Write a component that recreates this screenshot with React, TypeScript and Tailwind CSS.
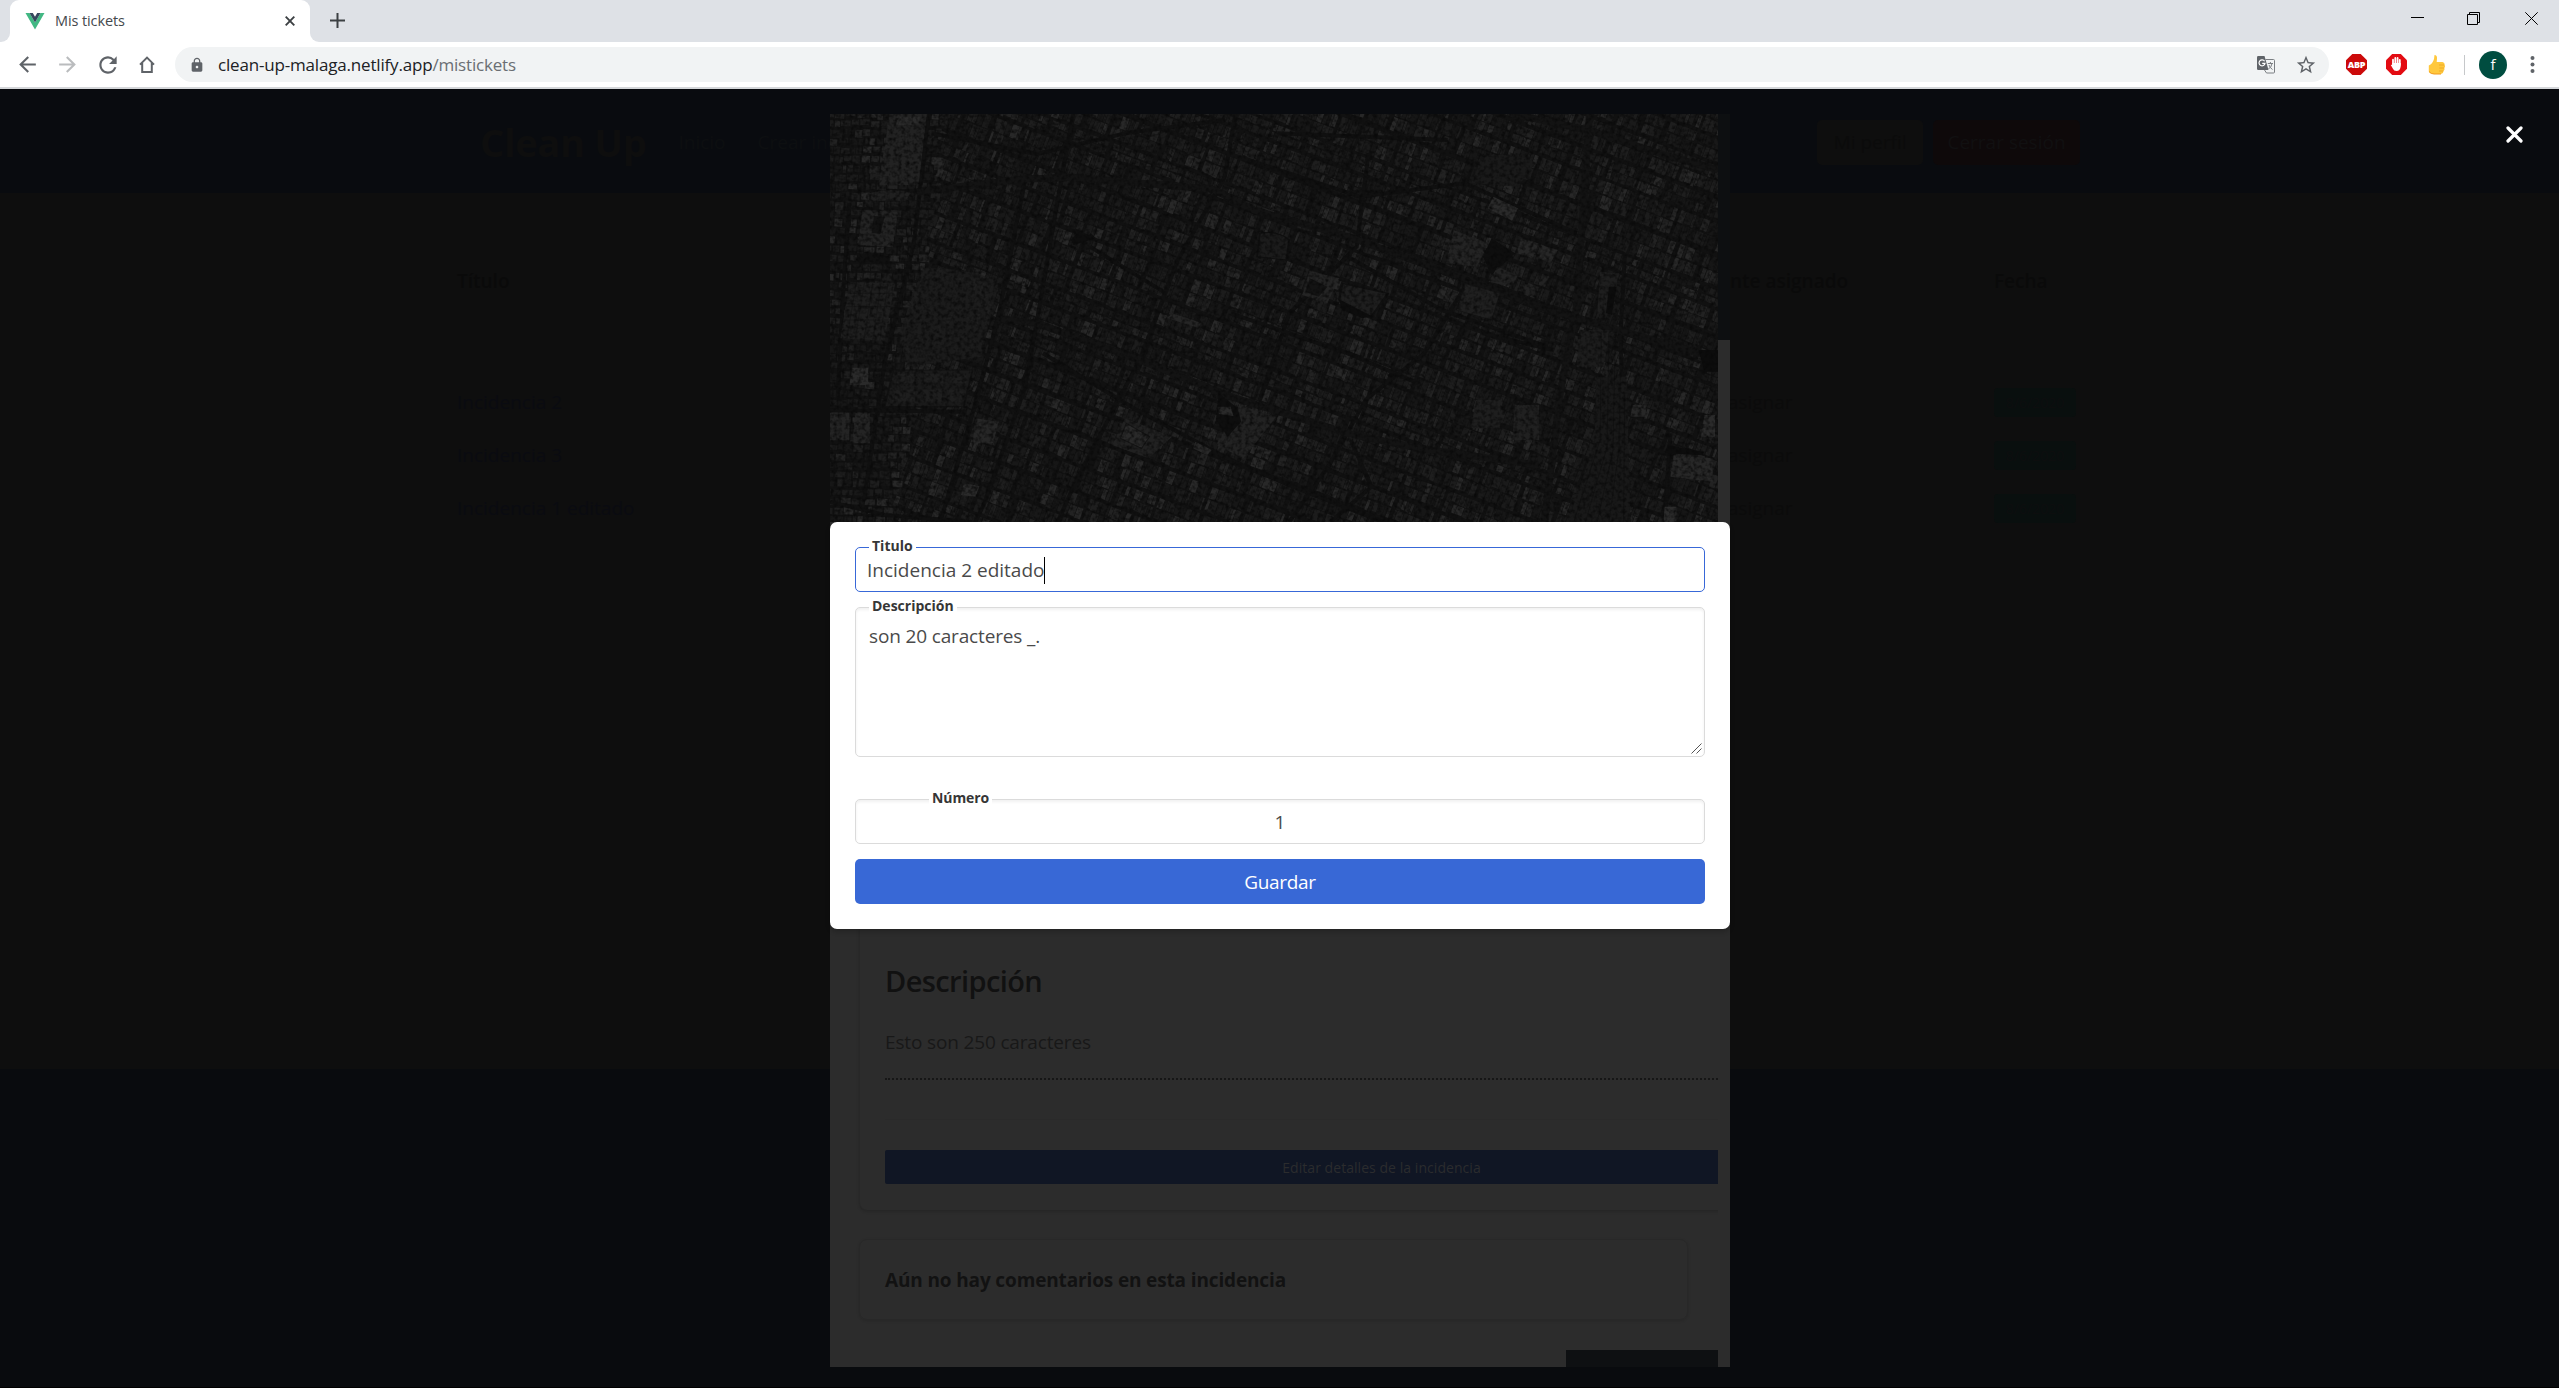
import React from "react";
import { MdArrowBack, MdArrowForward, MdLock, MdRefresh, MdStarBorder } from "react-icons/md";

const SHADES = ["#161616", "#181818", "#1a1a1a", "#1c1c1c", "#1e1e1e", "#222222", "#282828"];

function randomSource(seed: number) {
  let s = seed;
  return () => {
    s = (s * 1664525 + 1013904223) % 4294967296;
    return s / 4294967296;
  };
}

/* City blocks on a rotated street grid, each split into roofs grouped by shade. */
function buildRoofs() {
  const rnd = randomSource(41);
  const paths = SHADES.map(() => "");
  const roof = (x: number, y: number, w: number, h: number, a: number) => {
    const c = Math.cos(a);
    const s = Math.sin(a);
    const shade = Math.min(SHADES.length - 1, Math.floor(Math.pow(rnd(), 1.4) * SHADES.length));
    paths[shade] += `M${x.toFixed(1)} ${y.toFixed(1)}l${(w * c).toFixed(1)} ${(w * s).toFixed(1)}l${(-h * s).toFixed(1)} ${(h * c).toFixed(1)}l${(-w * c).toFixed(1)} ${(-w * s).toFixed(1)}z`;
  };
  const a = 0.36;
  const c = Math.cos(a);
  const s = Math.sin(a);
  let v = -340;
  while (v < 560) {
    const blockH = 15 + rnd() * 14;
    let u = -40 + rnd() * 20;
    while (u < 1080) {
      const blockW = 20 + rnd() * 26;
      const rows = 2;
      for (let r = 0; r < rows; r++) {
        const rowH = blockH / rows;
        let du = 0;
        while (du < blockW - 2) {
          const w = Math.min(2.5 + rnd() * 5.5, blockW - du);
          const x = (u + du) * c - (v + r * rowH) * s;
          const y = (u + du) * s + (v + r * rowH) * c;
          if (x > 112 - y * 0.12 && x < 900 && y > -30 && y < 415) {
            roof(x, y, w - 0.5, rowH - 0.4 - rnd() * 2, a + (rnd() - 0.5) * 0.04);
          }
          du += w;
        }
      }
      u += blockW + 2 + rnd() * 2;
    }
    v += blockH + 2 + rnd() * 2;
  }
  for (let y = -4; y < 410; y += 9) {
    let x = -3;
    while (x < 112 - y * 0.12) {
      const w = 3 + rnd() * 8;
      roof(x, y + rnd() * 2, w, 5 + rnd() * 3, 0.06);
      x += w + 0.6 + rnd() * 1.5;
    }
  }
  return paths;
}

const ROOFS = buildRoofs();

const WIDE_ROADS = [
  "M165 275L345 238L430 232L670 268L740 330L900 410L1100 535L1250 635L1400 710L1531 775",
  "M300 655L370 670L545 780L700 890L900 1000L1020 1045L1225 1095",
  "M1180 42L1310 90L1440 165L1531 210",
  "M1312 42L1290 620L1262 880L1235 1266",
];
const ROADS = [
  "M432 42L412 232L372 640L350 860L280 1210L265 1266",
  "M350 238L305 640L270 880L205 1266",
  "M185 42L160 430L110 790L75 1200",
  "M708 42L690 230L610 480L545 780L440 1130L405 1266",
  "M935 160L915 440L800 640L750 900",
  "M1080 390L1100 560L1030 760L930 900L870 1090L800 1266",
  "M1372 470L1365 690L1370 1100",
  "M50 310L40 560L30 900",
  "M17 930L250 935",
  "M190 100L370 162L520 100L690 60",
  "M730 180L920 290L1100 250L1290 400",
  "M780 100L1070 120",
  "M700 640L900 760L1020 850",
  "M380 760L540 930L700 1080L820 1170L960 1266",
  "M17 1205L110 1245L260 1266",
  "M905 1020L940 1160L870 1266",
  "M1130 700L1250 750",
  "M900 470L1060 630L1240 740",
  "M460 440L590 580",
  "M1450 1000L1440 1266",
];

function SatelliteMap() {
  return (
    <div className="relative h-[408px] shrink-0 overflow-hidden bg-[#111111]">
      <svg className="absolute inset-0 h-full w-full" viewBox="0 0 888 408">
        {ROOFS.map((d, i) => (
          <path key={i} d={d} fill={SHADES[i]} />
        ))}
      </svg>
      <svg className="absolute inset-0 h-full w-full" viewBox="17 42 1514 1224" preserveAspectRatio="none">
        <g fill="none" strokeLinejoin="round">
          {ROADS.map((d) => (
            <path key={d} d={d} stroke="#101010" strokeWidth="4" vectorEffect="non-scaling-stroke" />
          ))}
          {WIDE_ROADS.map((d) => (
            <path key={d} d={d} stroke="#131313" strokeWidth="7" vectorEffect="non-scaling-stroke" />
          ))}
        </g>
        <path d="M118 42H182L168 255H100z" fill="#222222" />
        <path d="M130 50H170V75H130z" fill="#2a2a2a" />
        <path d="M85 280Q125 260 155 280L145 302H90z" fill="#202020" />
        <path d="M72 330L133 335L124 442L65 435z" fill="#232323" />
        <path d="M92 348L110 350L103 402L88 398z" fill="#121212" />
        <path d="M64 460L120 470L116 490L62 482z" fill="#101010" />
        <path d="M50 545L128 550L110 722L35 715z" fill="#1e1e1e" />
        <g stroke="#151515" strokeWidth="1.5" fill="none">
          <path d="M62 546L46 715M76 546L60 716M90 547L75 718M104 548L90 720M116 549L102 720" />
          <path d="M48 580H126M45 620H121M42 660H118" />
        </g>
        <path d="M175 505Q250 500 305 545L275 770L150 800L135 700z" fill="#1c1c1c" opacity="0.85" />
        <path d="M125 810H260L245 920H110z" fill="#1a1a1a" stroke="#111111" strokeWidth="3" />
        <path d="M133 822H165V850H130zM178 822H210V850H175zM222 822H250V850H220zM128 868H162V905H122zM176 868H208V905H172zM220 868H245V905H216z" fill="#1e1e1e" />
        <path d="M55 803H82V855H50z" fill="#2a2a2a" />
        <path d="M17 938H50V1020H17zM60 940H85V1030H55z" fill="#242424" />
        <path d="M265 955L305 965L295 1030L260 1030z" fill="#262626" />
        <path d="M245 1150L272 1158L265 1190L240 1185z" fill="#2a2a2a" />
        <path d="M520 955L600 1010L560 1075L498 1035z" fill="#212121" />
        <path d="M522 970L562 1010L548 1045L512 1015z" fill="#292929" stroke="#151515" strokeWidth="2" />
        <path d="M600 640L650 668L645 684L592 655z" fill="#252525" />
        <path d="M640 1025L668 1050L660 1066L636 1045z" fill="#292929" />
        <path d="M715 915L778 950L722 1075L675 1035z" fill="#222222" />
        <path d="M680 880L712 925L718 965L695 1010L675 960z" fill="#0e0e0e" />
        <path d="M678 920L700 920L705 948L680 942z" fill="#2a2a2a" />
        <path d="M440 395L455 410L462 400L470 415L432 435L428 420z" fill="#0e0e0e" />
        <path d="M750 400Q780 390 800 420L795 480L745 470z" fill="#1b1b1b" stroke="#0f0f0f" strokeWidth="3" />
        <path d="M835 512L885 535L865 610L822 585z" fill="#242424" />
        <path d="M835 535L865 560L850 590L828 575z" fill="#131313" />
        <path d="M890 550L968 580L940 650L885 600z" fill="#1e1e1e" stroke="#101010" strokeWidth="4" />
        <path d="M885 600L938 648L925 655L890 630z" fill="#0d0d0d" />
        <path d="M1130 165Q1200 160 1220 190L1190 260L1110 250z" fill="#191919" />
        <path d="M1148 290L1190 325L1180 362L1138 325z" fill="#2a2a2a" />
        <path d="M1080 390L1140 430L1120 500L1068 490z" fill="#232323" />
        <path d="M1145 415L1185 460L1145 525L1130 470z" fill="#0e0e0e" />
        <path d="M1195 415L1225 430L1215 475L1188 460zM1230 435L1258 450L1245 490L1226 475z" fill="#262626" />
        <path d="M1155 500L1190 525L1180 560L1140 545zM1200 550L1225 565L1220 590L1196 575z" fill="#222222" />
        <path d="M1100 550L1160 580L1145 660L1085 630z" fill="#1f1f1f" stroke="#141414" strokeWidth="2" />
        <path d="M1185 915H1226V1020H1180z" fill="#202020" />
        <path d="M1118 900H1160V985H1110z" fill="#1e1e1e" />
        <path d="M1330 515L1362 520L1350 645L1325 640z" fill="#1e1e1e" />
        <path d="M1345 560L1358 560L1350 645L1340 640z" fill="#0c0c0c" />
        <path d="M1295 690H1350L1335 800H1290z" fill="#1c1c1c" />
        <path d="M1325 830L1375 830L1382 1266H1275L1320 1030z" fill="#181818" />
        <g fill="none" stroke="#101010" strokeWidth="1.5">
          <path d="M1332 700L1330 1020L1285 1266M1345 700L1342 1040L1305 1266M1356 700L1352 1050L1325 1266M1365 780L1362 1050L1345 1266M1372 880L1370 1266" />
        </g>
        <path d="M1498 750H1531V815H1508z" fill="#0c0c0c" />
        <path d="M1508 945H1526V1010H1502z" fill="#2b2b2b" />
        <path d="M1385 915H1408V950H1382zM1455 1065L1522 1075V1145L1450 1130z" fill="#272727" />
        <path d="M1445 1035L1505 1055V1066L1440 1060z" fill="#0d0d0d" />
        <path d="M1440 1220H1460V1266H1438z" fill="#2b2b2b" />
      </svg>
      <svg className="absolute inset-0 h-full w-full" viewBox="0 0 888 408">
        <filter id="grain" x="0" y="0" width="100%" height="100%" colorInterpolationFilters="sRGB">
          <feTurbulence type="fractalNoise" baseFrequency="0.25" numOctaves="3" seed="7" />
          <feColorMatrix values="0 0 0 0 0.03  0 0 0 0 0.03  0 0 0 0 0.03  0 1.8 0 0 -0.7" />
        </filter>
        <rect width="888" height="408" filter="url(#grain)" />
      </svg>
    </div>
  );
}

function TabStrip() {
  return (
    <div className="flex h-[42px] items-end justify-between bg-[#dee1e6]">
      <div className="flex h-full items-end">
        <div className="h-full w-[10px] bg-white">
          <div className="h-full w-full rounded-br-[9px] bg-[#dee1e6]" />
        </div>
        <div className="flex h-full w-[300px] items-center rounded-t-[9px] bg-white pr-[15px] pl-[15px]">
          <svg className="h-[18px] w-[20px]" viewBox="0 0 19 18">
            <path d="M0 1H4L9.5 10.5L15 1H19L9.5 17.5z" fill="#41b883" />
            <path d="M4 1H7.3L9.5 4.8L11.7 1H15L9.5 10.5z" fill="#35495e" />
          </svg>
          <span className="ml-[10px] grow text-[14.5px] tracking-[-0.1px] text-[#45494d]">Mis tickets</span>
          <svg className="h-[10px] w-[10px]" viewBox="0 0 10 10">
            <path d="M.7 .7L9.3 9.3M9.3 .7L.7 9.3" stroke="#3c4043" strokeWidth="1.9" />
          </svg>
        </div>
        <div className="h-full w-[10px] bg-white">
          <div className="h-full w-full rounded-bl-[9px] bg-[#dee1e6]" />
        </div>
        <svg className="mb-[14px] ml-[10px] h-[15px] w-[15px]" viewBox="0 0 15 15">
          <path d="M7.5 0V15M0 7.5H15" stroke="#3c4043" strokeWidth="2" />
        </svg>
      </div>
      <div className="flex h-full items-start gap-[43px] pt-[12px] pr-[21px]">
        <svg className="h-[13px] w-[13px]" viewBox="0 0 13 13">
          <path d="M0 5.5H13" stroke="#000" />
        </svg>
        <svg className="h-[13px] w-[13px]" viewBox="0 0 13 13">
          <path d="M.5 2.5H10.5V12.5H.5zM2.5 2.5V.5H12.5V10.5H10.5" fill="none" stroke="#000" />
        </svg>
        <svg className="ml-[2px] h-[13px] w-[13px]" viewBox="0 0 13 13">
          <path d="M.3 .3L12.7 12.7M12.7 .3L.3 12.7" stroke="#000" />
        </svg>
      </div>
    </div>
  );
}

function Toolbar() {
  return (
    <div className="flex h-[47px] items-center border-b-2 border-[#d5d7da] bg-white pl-[15px]">
      <MdArrowBack className="h-[25px] w-[25px] text-[#5f6368]" />
      <MdArrowForward className="ml-[15px] h-[25px] w-[25px] text-[#babcbe]" />
      <MdRefresh className="ml-[15px] h-[26px] w-[26px] text-[#5f6368]" />
      <svg className="ml-[18px] h-[18px] w-[16px]" viewBox="0 0 16 18">
        <path d="M1 8.6L8 1.6L15 8.6M3.2 7V16H12.8V7" fill="none" stroke="#5f6368" strokeWidth="2" />
      </svg>
      <div className="ml-[20px] flex h-[35px] w-[2154px] items-center rounded-full bg-[#f1f3f4] pr-[12px] pl-[14px]">
        <MdLock className="h-[16px] w-[16px] text-[#5f6368]" />
        <div className="ml-[13px] grow text-[17px] tracking-[-0.18px] text-[#202124]">
          clean-up-malaga.netlify.app<span className="text-[#6a6e73]">/mistickets</span>
        </div>
        <svg className="h-[18px] w-[18px]" viewBox="0 0 18 18">
          <path d="M8.5 3.5H16.5Q17.5 3.5 17.5 4.5V16Q17.5 17 16.5 17H9.5L7.5 14" fill="none" stroke="#7b7e82" />
          <path d="M1.2 0H7.5L11.5 14H1.2Q0 14 0 12.8V1.2Q0 0 1.2 0z" fill="#5f6368" />
          <path d="M7.6 5.3A3 3 0 1 0 8 7.4H5.2" fill="none" stroke="#fff" strokeWidth="1.2" />
          <path d="M10.8 7.5H16M13.4 6V7.5M15 7.5Q14.5 11 11.5 13M12 9Q13 12 15.5 13.5" fill="none" stroke="#7b7e82" />
        </svg>
        <MdStarBorder className="ml-[20px] h-[22px] w-[22px] text-[#5f6368]" />
      </div>
      <div className="ml-[17px] flex h-[21px] w-[21px] items-center justify-center bg-[#cc0a0a] text-[9px] font-extrabold tracking-[-0.2px] text-white [clip-path:polygon(30%_0,70%_0,100%_30%,100%_70%,70%_100%,30%_100%,0_70%,0_30%)]">
        ABP
      </div>
      <svg className="ml-[19px] h-[21px] w-[21px]" viewBox="0 0 21 21">
        <path d="M6.2 0H14.8L21 6.2V14.8L14.8 21H6.2L0 14.8V6.2z" fill="#e30b12" />
        <path d="M7 12V5.7M9.3 10V4M11.6 10V4M13.8 11V6" stroke="#fff" strokeWidth="1.8" strokeLinecap="round" />
        <path d="M6.1 9H14.7V12.5Q14 17 10.5 17Q7.8 17 6.8 14.5L4.8 11Q5.6 10 6.8 11.8z" fill="#fff" />
      </svg>
      <svg className="ml-[21px] h-[20px] w-[18px]" viewBox="0 0 18 20">
        <path d="M6.5 0Q9.3 0 9 3.5L8.7 7H14.5Q17 7.5 16.6 9.7Q17.6 11.5 16.4 13Q17 14.8 15.5 16Q15.5 18.5 13 19H5.5Q1.5 18.7 .8 16.5V10.5Q4.5 9 6 4z" fill="#ffc83d" />
        <path d="M11 10H16.3M11.3 13H16M11 16H15.3" stroke="#e8a21f" strokeWidth=".7" />
        <path d="M1 16.5Q3 19 6 19H13" fill="none" stroke="#f19a1f" />
      </svg>
      <div className="ml-[18px] h-[20px] w-px bg-[#c6c8ca]" />
      <div className="ml-[14px] flex h-[28px] w-[28px] items-center justify-center rounded-full bg-[#004d40] text-[15px] text-white">f</div>
      <svg className="ml-[23px] h-[17px] w-[5px]" viewBox="0 0 5 17">
        <circle cx="2.5" cy="2" r="2" fill="#5f6368" />
        <circle cx="2.5" cy="8.5" r="2" fill="#5f6368" />
        <circle cx="2.5" cy="15" r="2" fill="#5f6368" />
      </svg>
    </div>
  );
}

const TICKETS = ["Incidencia 2", "Incidencia 3", "Incidencia 1 editado"];

function DimmedPage() {
  return (
    <div className="flex h-full flex-col bg-[#0e0e0e] text-[19px]">
      <div className="flex h-[104px] shrink-0 items-center bg-[#090b0f] pt-[2px] pr-[479px] pl-[480px] text-[#0d0f11]">
        <span className="text-[38px] font-bold tracking-[-0.3px] text-[#0e0e0e]">Clean Up</span>
        <span className="ml-[32px]">Inicio</span>
        <span className="ml-[32px] grow">Crear incidencia</span>
        <span className="flex h-[45px] w-[106px] items-center justify-center rounded-[5px] bg-[#0e0e0e] text-[#0b0b0b]">Mi perfil</span>
        <span className="ml-[10px] flex h-[45px] w-[147px] items-center justify-center rounded-[5px] bg-[#0e090a] text-[#111011]">Cerrar sesión</span>
      </div>
      <div className="grow pr-[440px] pl-[457px] text-[#0b0b0b]">
        <div className="grid h-[177px] grid-cols-[1239px_298px_1fr] items-center pb-[1px] font-semibold text-[#0a0a0a]">
          <span>Título</span>
          <span>Agente asignado</span>
          <span>Fecha</span>
        </div>
        <div className="mt-[6px] flex flex-col">
          {TICKETS.map((ticket) => (
            <div key={ticket} className="grid h-[53px] grid-cols-[1239px_298px_1fr] items-center">
              <span className="text-[#0a0b11]">{ticket}</span>
              <span>Sin asignar</span>
              <span className="flex h-[29px] w-[82px] items-center justify-center rounded bg-[#090f0e] text-[14px] text-[#0d0e0e]">8/6/2020</span>
            </div>
          ))}
        </div>
      </div>
      <div className="h-[319px] shrink-0 border-b border-black bg-[#090b0e]" />
    </div>
  );
}

function DetailPanel() {
  return (
    <div className="absolute top-[25px] left-[830px] flex h-[1253px] w-[900px] overflow-hidden bg-[#2c2c2c]">
      <div className="flex w-[888px] flex-col overflow-hidden">
        <SatelliteMap />
        <div className="ml-[29px] flex h-[688px] w-[1044px] shrink-0 flex-col rounded-b-[8px] border-l border-[#282828] pr-[25px] pl-[25px] shadow-[0_2px_3px_rgba(0,0,0,0.14)]">
          <h2 className="mt-[436px] text-[29px] leading-[45px] font-semibold tracking-[-0.6px] text-[#111111]">Descripción</h2>
          <p className="mt-[24px] border-b-2 border-dotted border-[#161616] pb-[21px] text-[19px] leading-[30px] tracking-[-0.15px] text-[#181818]">Esto son 250 caracteres</p>
          <hr className="mt-[39px] border-[#2a2a2a]" />
          <div className="mt-[30px] flex h-[34px] items-center justify-center rounded-[2px] bg-[#101624] text-[14px] tracking-[0.05px] text-[#2b2c2e]">Editar detalles de la incidencia</div>
        </div>
        <div className="mt-[29px] ml-[29px] flex h-[81px] w-[829px] shrink-0 items-center rounded-[8px] border border-[#282828] pt-[1px] pl-[25px] shadow-[0_1px_3px_rgba(0,0,0,0.14)]">
          <span className="text-[19px] font-bold tracking-[-0.14px] text-[#121212]">Aún no hay comentarios en esta incidencia</span>
        </div>
        <div className="mt-[30px] ml-auto h-[17px] w-[152px] shrink-0 bg-[#0e1012]" />
      </div>
      <div className="h-[226px] w-[12px] bg-[#0d0f11]" />
    </div>
  );
}

function FieldLabel({ text, indent }: { text: string; indent: string }) {
  return <span className={`absolute top-[-11px] bg-white px-[3px] text-[14px] leading-[18px] font-bold text-[#363636] ${indent}`}>{text}</span>;
}

function EditForm() {
  return (
    <div className="absolute top-[433px] left-[830px] flex h-[407px] w-[900px] flex-col rounded-[7px] bg-white p-[25px] text-[19px] text-[#4a4a4a] shadow-[0_3px_5px_rgba(0,0,0,0.2)]">
      <div className="relative flex h-[45px] items-center rounded-[5px] border border-[#3868d8] pt-[2px] pl-[11px]">
        <FieldLabel text="Titulo" indent="left-[13px] tracking-[0px]" />
        <span className="tracking-[0px]">Incidencia 2 editado</span>
        <span className="h-[27px] w-px bg-black" />
      </div>
      <div className="relative mt-[15px] h-[150px] rounded-[5px] border border-[#dbdbdb] pt-[14px] pl-[13px] shadow-[inset_0_2px_3px_rgba(10,10,10,0.06)]">
        <FieldLabel text="Descripción" indent="left-[13px] tracking-[0px]" />
        <span className="tracking-[-0.15px]">son 20 caracteres _.</span>
        <svg className="absolute right-[2px] bottom-[2px] h-[11px] w-[11px]" viewBox="0 0 11 11">
          <path d="M.5 10.5L10.5 .5M5.5 10.5L10.5 5.5" stroke="#555" />
        </svg>
      </div>
      <div className="relative mt-[42px] flex h-[45px] items-center justify-center rounded-[5px] border border-[#dbdbdb] pt-[2px] shadow-[inset_0_2px_3px_rgba(10,10,10,0.06)]">
        <FieldLabel text="Número" indent="left-[73px] tracking-[-0.1px]" />
        1
      </div>
      <div className="mt-[15px] flex h-[45px] items-center justify-center rounded-[5px] bg-[#3868d6] pt-[2px] font-medium tracking-[-0.35px] text-white">Guardar</div>
    </div>
  );
}

export default function App() {
  return (
    <div className="flex h-[1388px] w-[2559px] flex-col overflow-hidden bg-black font-['Open_Sans','Noto_Sans',sans-serif] whitespace-nowrap">
      <TabStrip />
      <Toolbar />
      <div className="relative h-[1299px]">
        <DimmedPage />
        <DetailPanel />
        <EditForm />
        <svg className="absolute top-[37px] right-[36px] h-[17px] w-[17px]" viewBox="0 0 17 17">
          <path d="M2 2L15 15M15 2L2 15" stroke="#fff" strokeWidth="3.2" strokeLinecap="round" />
        </svg>
      </div>
    </div>
  );
}
